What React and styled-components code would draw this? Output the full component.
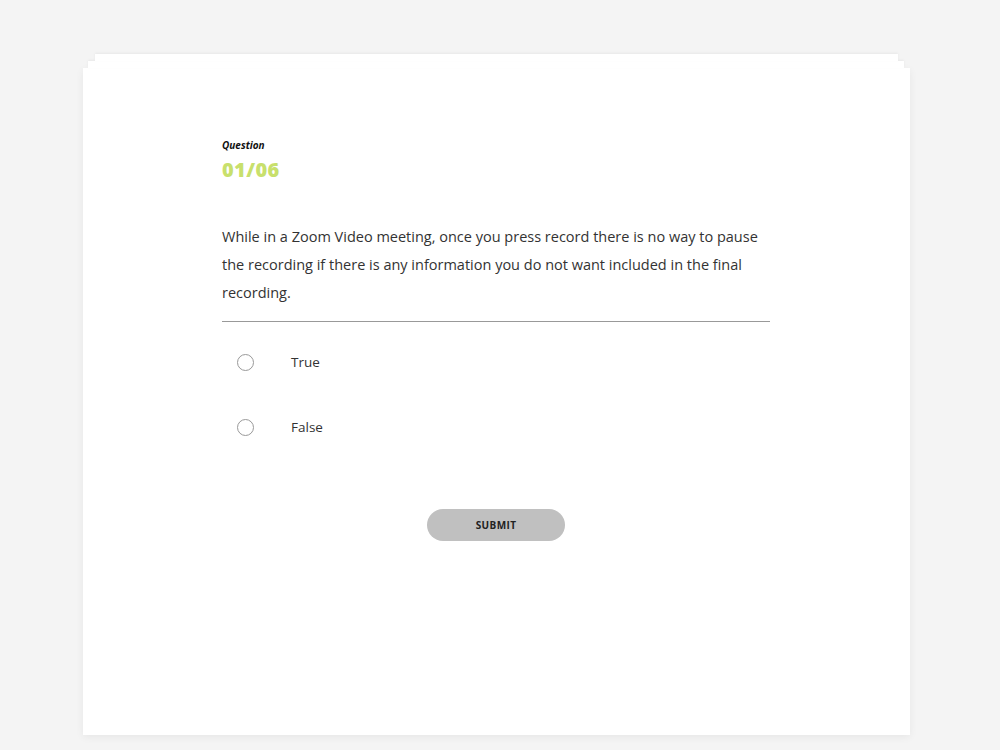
import React from "react";
import styled, { createGlobalStyle } from "styled-components";

const GlobalStyle = createGlobalStyle`
  html, body {
    margin: 0;
    padding: 0;
    background: #f4f4f4;
    font-family: "Open Sans", "Liberation Sans", sans-serif;
  }
`;

const Page = styled.div`
  width: 1000px;
  height: 750px;
  box-sizing: border-box;
  padding: 68px 90px 0 83px;
`;

// main card, with two sheets peeking out from behind its top edge
const Card = styled.div`
  position: relative;
  z-index: 0;
  width: 827px;
  height: 667px;
  box-sizing: border-box;
  background: #fff;
  box-shadow: 0 2px 8px rgba(0, 0, 0, 0.06);
  padding: 70px 0 0 139px;

  &::before,
  &::after {
    content: "";
    position: absolute;
    background: #fff;
    box-shadow: 0 -1px 3px rgba(0, 0, 0, 0.05);
  }
  &::before {
    top: -7px;
    height: 7px;
    left: 5px;
    right: 6px;
  }
  &::after {
    top: -14px;
    height: 7px;
    left: 12px;
    right: 12px;
  }
`;

const Quiz = styled.div`
  width: 548px;
`;

const Label = styled.div`
  font-size: 10px;
  font-weight: 700;
  font-style: italic;
  color: #111;
`;

const Counter = styled.div`
  margin-top: 4px;
  font-size: 20px;
  font-weight: 800;
  color: #c8e06c;
  letter-spacing: 0.4px;
`;

const Text = styled.p`
  margin: 40px 0 0;
  font-size: 14.5px;
  line-height: 28px;
  color: #333;
`;

const Divider = styled.hr`
  margin: 14px 0 0;
  border: 0;
  border-top: 1px solid #999;
`;

const Options = styled.div`
  display: flex;
  flex-direction: column;
  gap: 39px;
  margin-top: 27px;
`;

const Option = styled.label`
  display: flex;
  align-items: center;
  height: 26px;
  font-size: 13.5px;
  color: #333;
  cursor: pointer;
`;

const Radio = styled.span`
  width: 15px;
  height: 15px;
  border-radius: 50%;
  border: 1px solid #999;
  margin-left: 15px;
  margin-right: 37px;
`;

const Footer = styled.div`
  display: flex;
  justify-content: center;
  margin-top: 69px;
`;

const SubmitButton = styled.button`
  width: 138px;
  height: 32px;
  border: 0;
  border-radius: 16px;
  background: #c0c0c0;
  color: #222;
  font-family: inherit;
  font-size: 10px;
  font-weight: 700;
  letter-spacing: 0.4px;
`;

export default function App() {
  const options = ["True", "False"];
  return (
    <>
      <GlobalStyle />
      <Page>
        <Card>
          <Quiz>
            <Label>Question</Label>
            <Counter>01/06</Counter>
            <Text>
              While in a Zoom Video meeting, once you press record there is no way to pause
              the recording if there is any information you do not want included in the final
              recording.
            </Text>
            <Divider />
            <Options>
              {options.map((o) => (
                <Option key={o}>
                  <Radio />
                  {o}
                </Option>
              ))}
            </Options>
            <Footer>
              <SubmitButton>SUBMIT</SubmitButton>
            </Footer>
          </Quiz>
        </Card>
      </Page>
    </>
  );
}
